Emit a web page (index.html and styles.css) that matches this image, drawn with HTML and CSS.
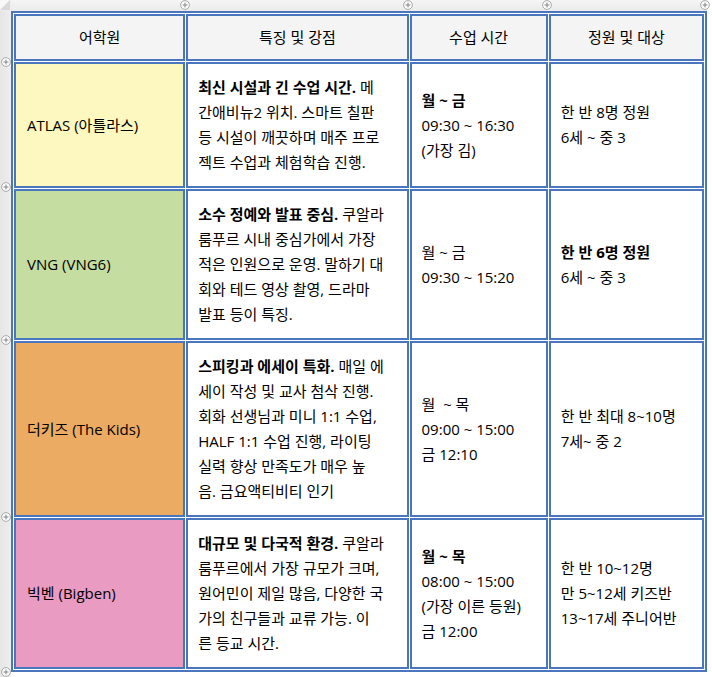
FILE: index.html
```html
<!DOCTYPE html>
<html lang="ko">
<head>
<meta charset="utf-8">
<title>어학원 비교</title>
<link rel="stylesheet" href="styles.css">
</head>
<body>
<div class="sheet">
  <div class="corner">
    <svg width="11" height="11" viewBox="0 0 11 11"><polygon points="0,0 10,0 0,10" fill="#f8f8f8"/><polygon points="10,0 10,10 0,10" fill="#d9d9d9"/></svg>
  </div>
  <div class="ruler-top">
    <span class="handle ht1"><svg width="10" height="10" viewBox="0 0 10 10"><circle cx="5" cy="5" r="4.4" fill="#fafafa" stroke="#a3a3a3" stroke-width="0.9"/><path d="M5 2.6v4.8M2.6 5h4.8" stroke="#7a7a7a" stroke-width="0.9"/></svg></span>
    <span class="handle ht2"><svg width="10" height="10" viewBox="0 0 10 10"><circle cx="5" cy="5" r="4.4" fill="#fafafa" stroke="#a3a3a3" stroke-width="0.9"/><path d="M5 2.6v4.8M2.6 5h4.8" stroke="#7a7a7a" stroke-width="0.9"/></svg></span>
    <span class="handle ht3"><svg width="10" height="10" viewBox="0 0 10 10"><circle cx="5" cy="5" r="4.4" fill="#fafafa" stroke="#a3a3a3" stroke-width="0.9"/><path d="M5 2.6v4.8M2.6 5h4.8" stroke="#7a7a7a" stroke-width="0.9"/></svg></span>
    <span class="handle ht4"><svg width="10" height="10" viewBox="0 0 10 10"><circle cx="5" cy="5" r="4.4" fill="#fafafa" stroke="#a3a3a3" stroke-width="0.9"/><path d="M5 2.6v4.8M2.6 5h4.8" stroke="#7a7a7a" stroke-width="0.9"/></svg></span>
  </div>
  <div class="ruler-left">
    <span class="handle hl1"><svg width="10" height="10" viewBox="0 0 10 10"><circle cx="5" cy="5" r="4.4" fill="#fafafa" stroke="#a3a3a3" stroke-width="0.9"/><path d="M5 2.6v4.8M2.6 5h4.8" stroke="#7a7a7a" stroke-width="0.9"/></svg></span>
    <span class="handle hl2"><svg width="10" height="10" viewBox="0 0 10 10"><circle cx="5" cy="5" r="4.4" fill="#fafafa" stroke="#a3a3a3" stroke-width="0.9"/><path d="M5 2.6v4.8M2.6 5h4.8" stroke="#7a7a7a" stroke-width="0.9"/></svg></span>
    <span class="handle hl3"><svg width="10" height="10" viewBox="0 0 10 10"><circle cx="5" cy="5" r="4.4" fill="#fafafa" stroke="#a3a3a3" stroke-width="0.9"/><path d="M5 2.6v4.8M2.6 5h4.8" stroke="#7a7a7a" stroke-width="0.9"/></svg></span>
    <span class="handle hl4"><svg width="10" height="10" viewBox="0 0 10 10"><circle cx="5" cy="5" r="4.4" fill="#fafafa" stroke="#a3a3a3" stroke-width="0.9"/><path d="M5 2.6v4.8M2.6 5h4.8" stroke="#7a7a7a" stroke-width="0.9"/></svg></span>
    <span class="handle hl5"><svg width="10" height="10" viewBox="0 0 10 10"><circle cx="5" cy="5" r="4.4" fill="#fafafa" stroke="#a3a3a3" stroke-width="0.9"/><path d="M5 2.6v4.8M2.6 5h4.8" stroke="#7a7a7a" stroke-width="0.9"/></svg></span>
  </div>
  <table class="grid">
    <colgroup>
      <col class="c1"><col class="c2"><col class="c3"><col class="c4">
    </colgroup>
    <thead>
      <tr>
        <th>어학원</th>
        <th>특징 및 강점</th>
        <th>수업 시간</th>
        <th>정원 및 대상</th>
      </tr>
    </thead>
    <tbody>
      <tr>
        <td class="name yellow">ATLAS (아틀라스)</td>
        <td class="desc"><b>최신 시설과 긴 수업 시간.</b> 메<br>간애비뉴2 위치. 스마트 칠판<br>등 시설이 깨끗하며 매주 프로<br>젝트 수업과 체험학습 진행.</td>
        <td><b>월 ~ 금</b><br>09:30 ~ 16:30<br>(가장 김)</td>
        <td>한 반 8명 정원<br>6세 ~ 중 3</td>
      </tr>
      <tr>
        <td class="name green">VNG (VNG6)</td>
        <td class="desc"><b>소수 정예와 발표 중심.</b> 쿠알라<br>룸푸르 시내 중심가에서 가장<br>적은 인원으로 운영. 말하기 대<br>회와 테드 영상 촬영, 드라마<br>발표 등이 특징.</td>
        <td>월 ~ 금<br>09:30 ~ 15:20</td>
        <td><b>한 반 6명 정원</b><br>6세 ~ 중 3</td>
      </tr>
      <tr>
        <td class="name orange">더키즈 (The Kids)</td>
        <td class="desc"><b>스피킹과 에세이 특화.</b> 매일 에<br>세이 작성 및 교사 첨삭 진행.<br>회화 선생님과 미니 1:1 수업,<br>HALF 1:1 수업 진행, 라이팅<br>실력 향상 만족도가 매우 높<br>음. 금요액티비티 인기</td>
        <td>월&nbsp; ~ 목<br>09:00 ~ 15:00<br>금 12:10</td>
        <td>한 반 최대 8~10명<br>7세~ 중 2</td>
      </tr>
      <tr>
        <td class="name pink">빅벤 (Bigben)</td>
        <td class="desc"><b>대규모 및 다국적 환경.</b> 쿠알라<br>룸푸르에서 가장 규모가 크며,<br>원어민이 제일 많음, 다양한 국<br>가의 친구들과 교류 가능. 이<br>른 등교 시간.</td>
        <td><b>월 ~ 목</b><br>08:00 ~ 15:00<br>(가장 이른 등원)<br>금 12:00</td>
        <td>한 반 10~12명<br>만 5~12세 키즈반<br>13~17세 주니어반</td>
      </tr>
    </tbody>
  </table>
</div>
</body>
</html>
```

FILE: styles.css
```css
html, body {
  margin: 0;
  padding: 0;
  background: #ffffff;
}

body {
  font-family: "Open Sans", "Noto Sans CJK KR", sans-serif;
  color: #000000;
  width: 712px;
  height: 677px;
  overflow: hidden;
}

.sheet {
  display: grid;
  grid-template-columns: 11px max-content;
  grid-template-rows: 11px auto;
  height: 677px;
}

.corner {
  background: #ececec;
  line-height: 0;
}

.ruler-top {
  position: relative;
  background: linear-gradient(#f5f5f5, #ebebeb);
}

.ruler-left {
  position: relative;
  background: linear-gradient(90deg, #e6e6e6, #eeeeee);
}

.handle {
  position: absolute;
  width: 10px;
  height: 10px;
  line-height: 0;
}

.ht1 { left: 169px; top: 0; }
.ht2 { left: 392px; top: 0; }
.ht3 { left: 531px; top: 0; }
.ht4 { left: 689px; top: 0; }

.hl1 { left: 1px; top: 46px; }
.hl2 { left: 1px; top: 171px; }
.hl3 { left: 1px; top: 324px; }
.hl4 { left: 1px; top: 501px; }
.hl5 { left: 1px; top: 656px; }

.grid {
  border-collapse: separate;
  border-spacing: 1px;
  border: 2px solid #4a76bf;
  table-layout: fixed;
  width: 696px;
  align-self: start;
}

.c1 { width: 171px; }
.c2 { width: 222px; }
.c3 { width: 138px; }
.c4 { width: 155px; }

.grid th,
.grid td {
  border: 2px solid #4a76bf;
  font-size: 15px;
  line-height: 25px;
  font-weight: 400;
  vertical-align: middle;
  text-align: left;
  padding: 11px 10px;
  background: #ffffff;
}

.grid th {
  background: #f4f4f4;
  text-align: center;
  padding: 9px 10px;
}

.grid b {
  font-weight: 700;
}

.grid td.name {
  padding-left: 11px;
}

.grid td.desc {
  white-space: nowrap;
  padding-right: 6px;
}

.grid td.tall {
  padding-top: 12px;
  padding-bottom: 12px;
}

.grid td.yellow { background: #fcf8bf; }
.grid td.green  { background: #c5dda1; }
.grid td.orange { background: #ebab62; }
.grid td.pink   { background: #e99bc2; }
```
